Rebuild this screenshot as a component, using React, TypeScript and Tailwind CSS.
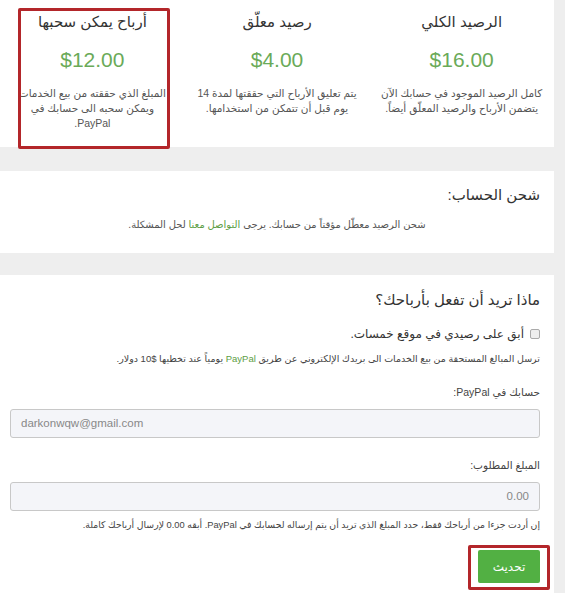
const font = "font-['Liberation_Sans','DejaVu_Sans',sans-serif]";

function BalanceColumn({ title, amount, lines }: { title: string; amount: string; lines: string[] }) {
  return (
    <div className="flex w-1/3 flex-col items-center px-1 pt-[10px] text-center">
      <h3 className="text-[15px] leading-6 text-[#333]">{title}</h3>
      <div className="mt-[12px] text-[21px] leading-7 text-[#6aaa58]">{amount}</div>
      <p className="mt-[12px] whitespace-nowrap text-[10.5px] leading-[15px] text-[#555]">
        {lines.map((l, i) => (
          <span key={i} className="block">
            {l}
          </span>
        ))}
      </p>
    </div>
  );
}

export default function App() {
  return (
    <div dir="rtl" className={`${font} flex min-h-[593px] w-[565px] flex-col gap-[24px] overflow-hidden bg-[#eeeeee] pr-[11px]`}>
      {/* balances */}
      <section className="relative flex h-[147px] w-full bg-white">
        <BalanceColumn
          title="الرصيد الكلي"
          amount="$16.00"
          lines={["كامل الرصيد الموجود في حسابك الآن", "يتضمن الأرباح والرصيد المعلّق أيضاً."]}
        />
        <BalanceColumn
          title="رصيد معلّق"
          amount="$4.00"
          lines={["يتم تعليق الأرباح التي حققتها لمدة 14", "يوم قبل أن تتمكن من استخدامها."]}
        />
        <BalanceColumn
          title="أرباح يمكن سحبها"
          amount="$12.00"
          lines={["المبلغ الذي حققته من بيع الخدمات", "ويمكن سحبه الى حسابك في", "PayPal."]}
        />
        <div className="absolute left-[18px] top-[8px] h-[141px] w-[152px] rounded-[2px] border-[3px] border-[#b3262a]" />
      </section>

      {/* recharge */}
      <section className="flex h-[82px] w-full flex-col bg-white px-[14px] pt-[12px]">
        <h3 className="text-[15px] leading-6 text-[#333]">شحن الحساب:</h3>
        <p className="mt-[10px] text-center text-[10px] leading-4 text-[#555]">
          شحن الرصيد معطّل مؤقتاً من حسابك. يرجى <span className="text-[#5d9e45]">التواصل معنا</span> لحل المشكلة.
        </p>
      </section>

      {/* withdraw */}
      <section className="-mt-[2px] flex w-full flex-1 flex-col bg-white pl-[10px] pr-[14px] pt-[13px]">
        <h3 className="text-[15px] leading-6 text-[#333]">ماذا تريد أن تفعل بأرباحك؟</h3>
        <label className="mt-[12px] flex items-center gap-[6px] text-[12px] leading-5 text-[#333]">
          <span className="h-[10px] w-[10px] rounded-[2px] border border-[#aaa] bg-[#eee]" />
          أبق على رصيدي في موقع خمسات.
        </label>
        <p className="mt-[7px] text-[9.5px] leading-4 text-[#444]">
          ترسل المبالغ المستحقة من بيع الخدمات الى بريدك الإلكتروني عن طريق{" "}
          <span className="text-[#5d9e45]">PayPal</span> يومياً عند تخطيها $10 دولار.
        </p>

        <div className="mt-[17px] text-[10.5px] leading-4 text-[#444]">حسابك في PayPal:</div>
        <div
          dir="ltr"
          className="mt-[9px] flex h-[29px] items-center rounded-[3px] border border-[#c8c8c8] bg-[#f4f5f9] px-[10px] text-[11.5px] text-[#888]"
        >
          darkonwqw@gmail.com
        </div>

        <div className="mt-[19px] text-[10.5px] leading-4 text-[#444]">المبلغ المطلوب:</div>
        <div className="mt-[9px] flex h-[29px] items-center rounded-[3px] border border-[#c8c8c8] bg-[#f4f5f9] px-[10px] text-[11.5px] text-[#888]">
          0.00
        </div>
        <p className="mt-[6px] text-[9.3px] leading-4 text-[#444]">
          إن أردت جزءا من أرباحك فقط، حدد المبلغ الذي تريد أن يتم إرساله لحسابك في PayPal. أبقه 0.00 لإرسال أرباحك كاملة.
        </p>

        <div className="mt-[17px] flex">
          <div className="relative">
            <button className="flex h-[33px] w-[62px] items-center justify-center rounded-[2px] bg-[#52b043] text-[12px] text-white">
              تحديث
            </button>
            <div className="absolute -inset-x-[10px] -bottom-[7px] -top-[5px] rounded-[2px] border-[3px] border-[#b3262a]" />
          </div>
        </div>
      </section>
    </div>
  );
}
